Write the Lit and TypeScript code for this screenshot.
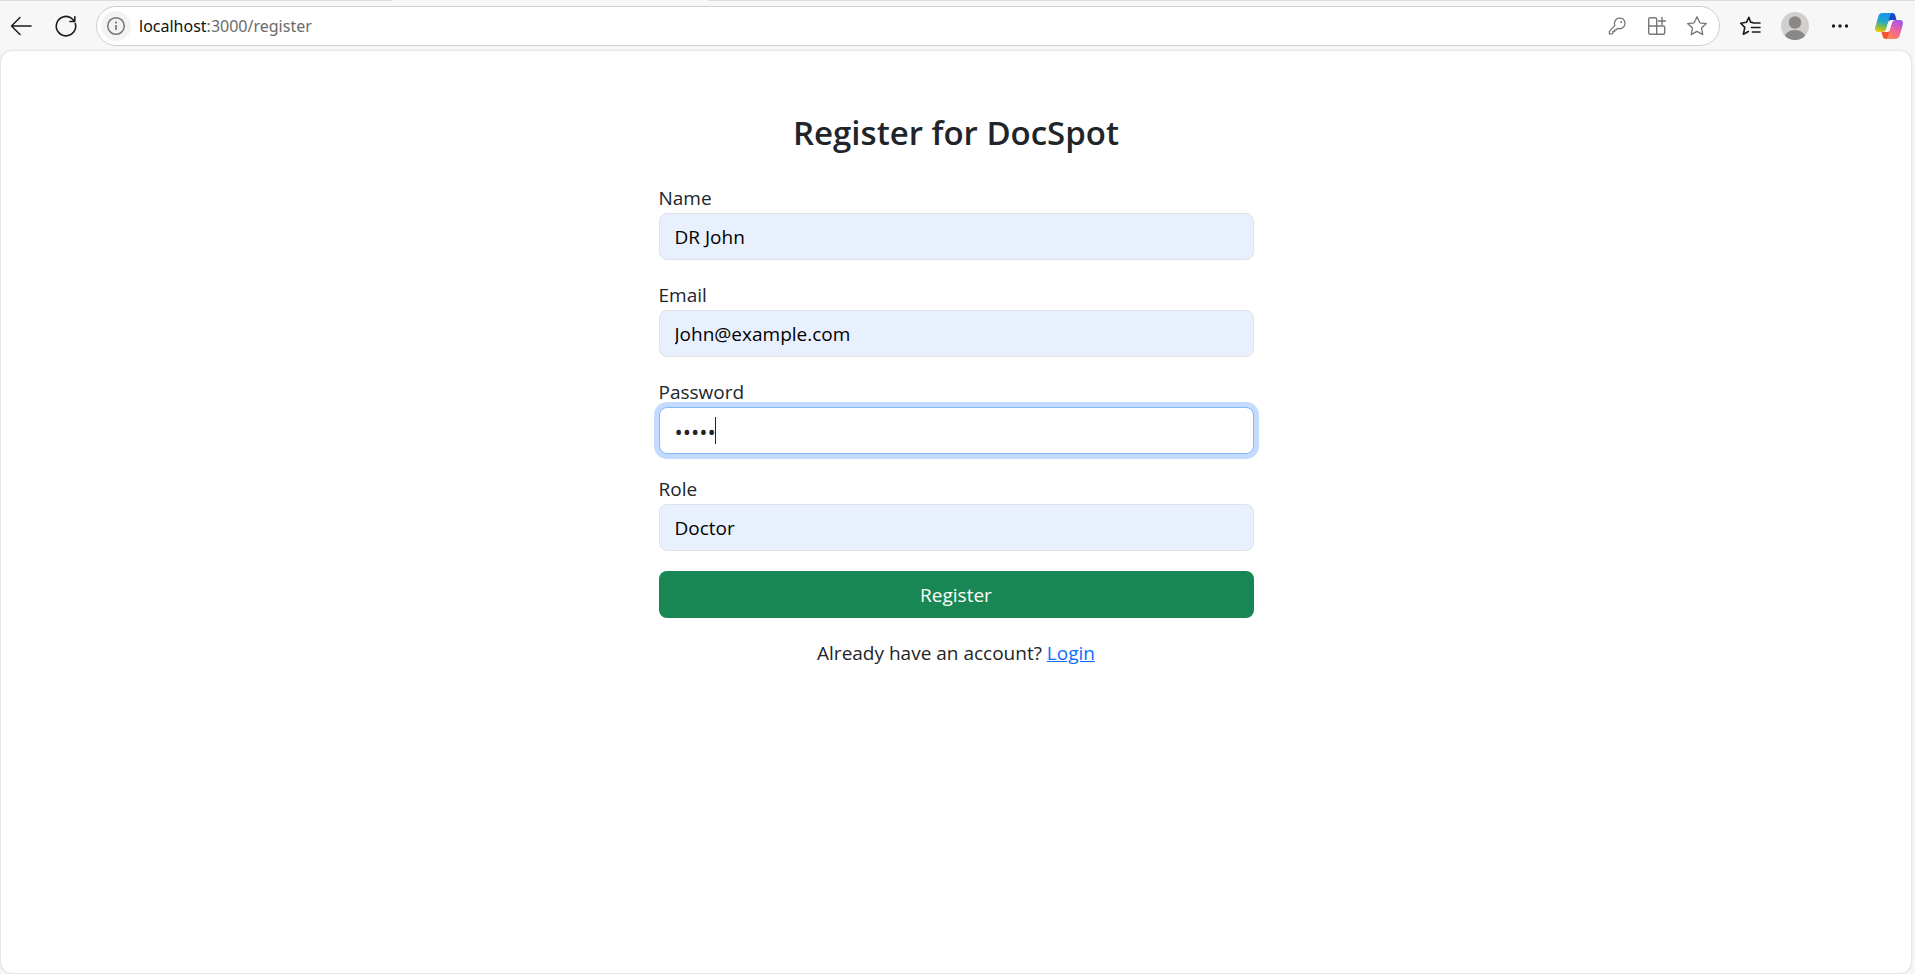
import { LitElement, html, css } from "lit";
import { customElement, state } from "lit/decorators.js";

const ui = css`
  * {
    box-sizing: border-box;
  }
  svg {
    display: block;
    fill: none;
  }
`;

@customElement("browser-bar")
class BrowserBar extends LitElement {
  static styles = [
    ui,
    css`
      :host {
        display: block;
        flex: none;
        background: #f7f7f7;
      }
      .strip {
        display: flex;
        gap: 316px;
        height: 1px;
      }
      .strip span {
        width: 392px;
        background: #dcdcdc;
      }
      .strip span:last-child {
        flex: 1;
      }
      .bar {
        display: flex;
        align-items: center;
        height: 49px;
        padding: 0 6px 0 1px;
      }
      button {
        display: grid;
        place-items: center;
        flex: none;
        margin: 0;
        padding: 0;
        border: 0;
        background: none;
        color: #1b1b1b;
        width: 40px;
        height: 40px;
      }
      .nav {
        display: flex;
        gap: 5px;
        margin-right: 10px;
      }
      .address {
        flex: 1;
        display: flex;
        align-items: center;
        height: 40px;
        padding: 0 2px 0 4px;
        border: 1px solid #cfcfcf;
        border-radius: 20px;
        background: #fff;
      }
      .address button {
        color: #767676;
      }
      .address .info {
        width: 30px;
        height: 30px;
        border-radius: 50%;
        background: #f3f3f3;
      }
      .url {
        flex: 1;
        margin: 0 8px;
        font: 16px/24px "Noto Sans", "Open Sans", sans-serif;
        color: #6b6b6b;
      }
      .host {
        color: #111;
      }
      .tools {
        display: flex;
        gap: 5px;
        margin-left: 10px;
      }
      .copilot {
        margin-left: 4px;
      }
    `,
  ];

  render() {
    return html`
      <div class="strip"><span></span><span></span></div>
      <div class="bar">
        <div class="nav">
          <button aria-label="Back">
            <svg width="24" height="24" stroke="currentColor" stroke-width="1.5" stroke-linecap="round" stroke-linejoin="round"><path d="M22 12H2.5M11 3.5L2.5 12l8.500 8.500" /></svg>
          </button>
          <button aria-label="Refresh">
            <svg width="24" height="24" stroke="currentColor" stroke-width="1.600" stroke-linecap="round" stroke-linejoin="round"><path d="M21.300 9.500A9.700 9.700 0 1 1 17.500 4.200L20.500 7.300M20.800 2.800V7.500H16" /></svg>
          </button>
        </div>
        <div class="address">
          <button class="info" aria-label="View site information">
            <svg width="20" height="20" stroke="currentColor" stroke-width="1.500"><circle cx="10" cy="10" r="8.300" /><path d="M10 9v5" stroke-width="1.700" /><circle cx="10" cy="6.600" r="1.100" fill="currentColor" stroke="none" /></svg>
          </button>
          <div class="url"><span class="host">localhost</span>:3000/register</div>
          <button aria-label="Saved passwords">
            <svg width="20" height="20" stroke="currentColor" stroke-width="1.300" stroke-linejoin="round"><path d="M7.800 9.400A5.300 5.300 0 1 1 11.600 12.600L10.400 12.400L9.200 13.800H7.700V15.500H5.900V17.200L5.200 17.900H2.400V15.400Z" /><circle cx="14.200" cy="6" r="1" fill="currentColor" stroke="none" /></svg>
          </button>
          <button aria-label="App available">
            <svg width="20" height="20" stroke="currentColor" stroke-width="1.400" stroke-linejoin="round" stroke-linecap="round"><path d="M9.700 10V3.200a1.500 1.500 0 0 0-1.500-1.500H3.200a1.500 1.500 0 0 0-1.500 1.500v13.600a1.500 1.500 0 0 0 1.500 1.500H16.200a1.500 1.500 0 0 0 1.500-1.500V11.500a1.500 1.500 0 0 0-1.500-1.500H1.700M9.700 10v8.300M15 1.500v7M11.500 5h7" /></svg>
          </button>
          <button aria-label="Add to favorites">
            <svg width="22" height="22" stroke="currentColor" stroke-width="1.300" stroke-linejoin="round"><path d="M11 1.800l2.800 6 6.600.8-4.900 4.500 1.300 6.500L11 16.400l-5.800 3.200 1.300-6.500L1.600 8.600l6.600-.8z" /></svg>
          </button>
        </div>
        <div class="tools">
          <button aria-label="Favorites">
            <svg width="22" height="22" stroke="currentColor" stroke-width="1.600" stroke-linejoin="round" stroke-linecap="round"><path d="M13.200 7.400L11.500 7.100 9.900 2.300 7.400 7.300 1.700 8.200l4.100 4.200-1.400 6.800 5-2.700M14 8h7M12.500 12.500H21M13.500 17H21" /></svg>
          </button>
          <button aria-label="Profile">
            <svg width="28" height="28"><clipPath id="disc"><circle cx="14" cy="14" r="14" /></clipPath><g clip-path="url(#disc)"><rect width="28" height="28" fill="#d2d0ce" /><circle cx="14" cy="10.500" r="6.200" fill="#8a8886" /><ellipse cx="14" cy="26" rx="10.500" ry="8" fill="#8a8886" /></g></svg>
          </button>
          <button aria-label="Settings and more">
            <svg width="20" height="20"><g fill="currentColor"><circle cx="3.500" cy="10" r="1.700" /><circle cx="10" cy="10" r="1.700" /><circle cx="16.500" cy="10" r="1.700" /></g></svg>
          </button>
          <button class="copilot" aria-label="Copilot">
            <svg width="30" height="28" viewBox="0 0 30 28">
              <defs>
                <linearGradient id="a" x1="0.500" y1="0" x2="0.300" y2="1"><stop offset="0" stop-color="#1692f0" /><stop offset=".45" stop-color="#22a9c9" /><stop offset=".75" stop-color="#8bbd45" /><stop offset="1" stop-color="#f3c60d" /></linearGradient>
                <linearGradient id="b" x1="0.700" y1="0" x2="0.200" y2="1"><stop offset="0" stop-color="#a556ea" /><stop offset=".5" stop-color="#f0649b" /><stop offset="1" stop-color="#ff8a4c" /></linearGradient>
              </defs>
              <path fill="#1648c5" d="M14 1h4.500c1.500 0 2.300.9 2.800 2.500L22.500 8H18c-2 0-3 1-3.500 2.500z" />
              <path fill="#f4552e" d="M16 27h-4.500c-1.500 0-2.300-.9-2.800-2.500L7.500 20H12c2 0 3-1 3.500-2.500z" />
              <path fill="url(#a)" d="M8.500 1H19c-1.700 0-2.600 1.300-3.100 3l-3.500 12.500C11.700 19 10.700 20 8.500 20H4.300C1.500 20 .5 18 1.200 15.400L4.400 4.200C5 2.200 6.300 1 8.500 1z" />
              <path fill="url(#b)" d="M21.500 27H11c1.700 0 2.600-1.300 3.100-3l3.500-12.500C18.300 9 19.300 8 21.500 8h4.200c2.800 0 3.800 2 3.100 4.600l-3.200 11.200c-.6 2-1.900 3.200-4.100 3.200z" />
              <path fill="#f7f7f7" d="M16.800 8.300H21c-1.800.3-2.800 1.300-3.400 3.200l-1.900 6.400c-.4 1.300-1.200 2-2.500 2H10c1.400-.5 2-1.600 2.400-3.200l1.700-5.800c.5-1.600 1.300-2.600 2.700-2.600z" />
            </svg>
          </button>
        </div>
      </div>
    `;
  }
}

@customElement("register-form")
class RegisterForm extends LitElement {
  @state() private name = "DR John";
  @state() private email = "John@example.com";
  @state() private password = "12345";

  static styles = [
    ui,
    css`
      :host {
        display: block;
        color: #212529;
        font: 19px/30px "Open Sans", "Noto Sans", sans-serif;
      }
      form {
        width: 100%;
        max-width: 595px;
        margin: 0 auto;
        padding-top: 58px;
      }
      h2 {
        margin: 0 0 26px;
        font-size: 33px;
        line-height: 48px;
        font-weight: 600;
        text-align: center;
      }
      .field {
        position: relative;
        margin-bottom: 20px;
      }
      label {
        display: block;
      }
      input,
      select {
        display: block;
        appearance: none;
        width: 100%;
        height: 47px;
        margin: 0;
        padding: 0 15px;
        border: 1px solid #dee2e6;
        border-radius: 8px;
        outline: 0;
        background: #e8f0fe;
        color: #000;
        font: inherit;
      }
      .active {
        border-color: #86b7fe;
        background: #fff;
        color: #212529;
        font-size: 22px;
        box-shadow: 0 0 0 5px #c2dbfe;
      }
      .caret {
        position: absolute;
        left: 56px;
        bottom: 10px;
        width: 1px;
        height: 27px;
        background: #212529;
      }
      .submit {
        display: block;
        width: 100%;
        height: 47px;
        margin: 0;
        padding: 0;
        border: 0;
        border-radius: 8px;
        background: #198754;
        color: #fff;
        font: inherit;
      }
      p {
        margin: 20px 0 0;
        text-align: center;
      }
      a {
        color: #0d6efd;
      }
    `,
  ];

  render() {
    return html`
      <form @submit=${(e: Event) => e.preventDefault()}>
        <h2>Register for DocSpot</h2>
        <div class="field">
          <label for="name">Name</label>
          <input id="name" type="text" .value=${this.name} />
        </div>
        <div class="field">
          <label for="email">Email</label>
          <input id="email" type="email" .value=${this.email} />
        </div>
        <div class="field">
          <label for="password">Password</label>
          <input id="password" class="active" type="password" .value=${this.password} />
          <span class="caret"></span>
        </div>
        <div class="field">
          <label for="role">Role</label>
          <select id="role">
            <option>Doctor</option>
          </select>
        </div>
        <button class="submit" type="submit">Register</button>
        <p>Already have an account? <a href="#login">Login</a></p>
      </form>
    `;
  }
}

@customElement("app-root")
class AppRoot extends LitElement {
  static styles = [
    ui,
    css`
      :host {
        display: flex;
        flex-direction: column;
        min-height: 100vh;
        background: #f7f7f7;
      }
      main {
        flex: 1;
        margin: 0 3px 0 0;
        border: 1px solid #e6e6e6;
        border-radius: 12px;
        background: #fff;
        box-shadow: 0 0 2px #e0e0e0;
      }
    `,
  ];

  render() {
    return html`
      <browser-bar></browser-bar>
      <main><register-form></register-form></main>
    `;
  }
}
